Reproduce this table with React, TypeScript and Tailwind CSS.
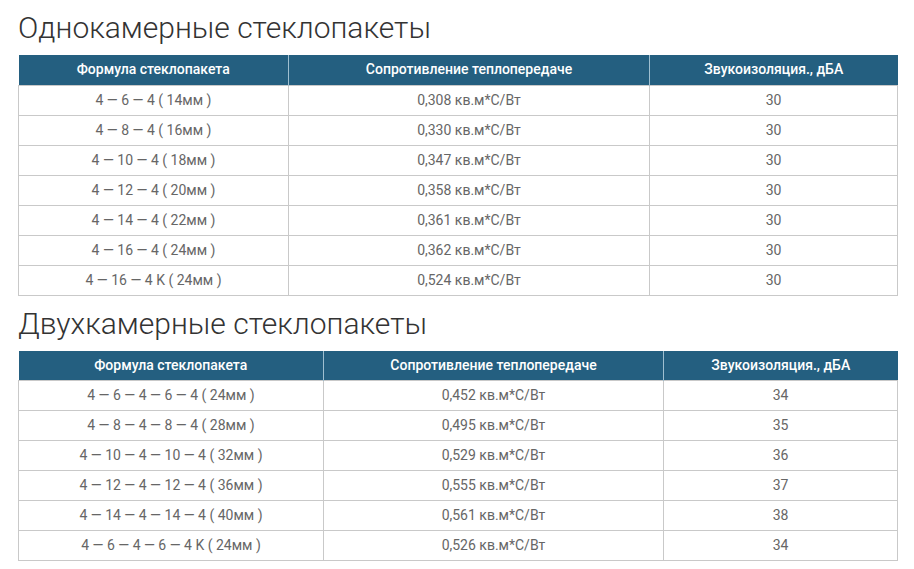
const single = [
  ["4 — 6 — 4 ( 14мм )", "0,308 кв.м*С/Вт", "30"],
  ["4 — 8 — 4 ( 16мм )", "0,330 кв.м*С/Вт", "30"],
  ["4 — 10 — 4 ( 18мм )", "0,347 кв.м*С/Вт", "30"],
  ["4 — 12 — 4 ( 20мм )", "0,358 кв.м*С/Вт", "30"],
  ["4 — 14 — 4 ( 22мм )", "0,361 кв.м*С/Вт", "30"],
  ["4 — 16 — 4 ( 24мм )", "0,362 кв.м*С/Вт", "30"],
  ["4 — 16 — 4 K ( 24мм )", "0,524 кв.м*С/Вт", "30"],
];

const double = [
  ["4 — 6 — 4 — 6 — 4 ( 24мм )", "0,452 кв.м*С/Вт", "34"],
  ["4 — 8 — 4 — 8 — 4 ( 28мм )", "0,495 кв.м*С/Вт", "35"],
  ["4 — 10 — 4 — 10 — 4 ( 32мм )", "0,529 кв.м*С/Вт", "36"],
  ["4 — 12 — 4 — 12 — 4 ( 36мм )", "0,555 кв.м*С/Вт", "37"],
  ["4 — 14 — 4 — 14 — 4 ( 40мм )", "0,561 кв.м*С/Вт", "38"],
  ["4 — 6 — 4 — 6 — 4 K ( 24мм )", "0,526 кв.м*С/Вт", "34"],
];

function SpecTable({ rows, cols }: { rows: string[][]; cols: string[] }) {
  return (
    <table className="w-[879px] table-fixed border-collapse text-center">
      <colgroup>
        {cols.map((w, i) => (
          <col key={i} style={{ width: w }} />
        ))}
      </colgroup>
      <thead>
        <tr className="h-[30px] bg-[#245f80] text-[14px] font-medium text-white">
          <th className="border-r border-[#9fbfd0] font-medium">Формула стеклопакета</th>
          <th className="border-r border-[#9fbfd0] font-medium">Сопротивление теплопередаче</th>
          <th className="font-medium">Звукоизоляция., дБА</th>
        </tr>
      </thead>
      <tbody className="text-[14px] text-[#666]">
        {rows.map((r, i) => (
          <tr key={i} className="h-[30px]">
            {r.map((c, j) => (
              <td key={j} className="border border-[#c9c9c9] p-0">
                {c}
              </td>
            ))}
          </tr>
        ))}
      </tbody>
    </table>
  );
}

export default function App() {
  return (
    <div className="min-h-[569px] bg-white pl-[18px] pt-[10px] font-['Roboto',sans-serif]">
      <h1 className="text-[30px] font-light leading-[36px] text-[#333]">Однокамерные стеклопакеты</h1>
      <div className="mt-[9px]">
        <SpecTable rows={single} cols={["270px", "361px", "248px"]} />
      </div>
      <h2 className="mt-[10px] text-[30px] font-light leading-[36px] text-[#333]">Двухкамерные стеклопакеты</h2>
      <div className="mt-[9px]">
        <SpecTable rows={double} cols={["305px", "340px", "234px"]} />
      </div>
    </div>
  );
}
